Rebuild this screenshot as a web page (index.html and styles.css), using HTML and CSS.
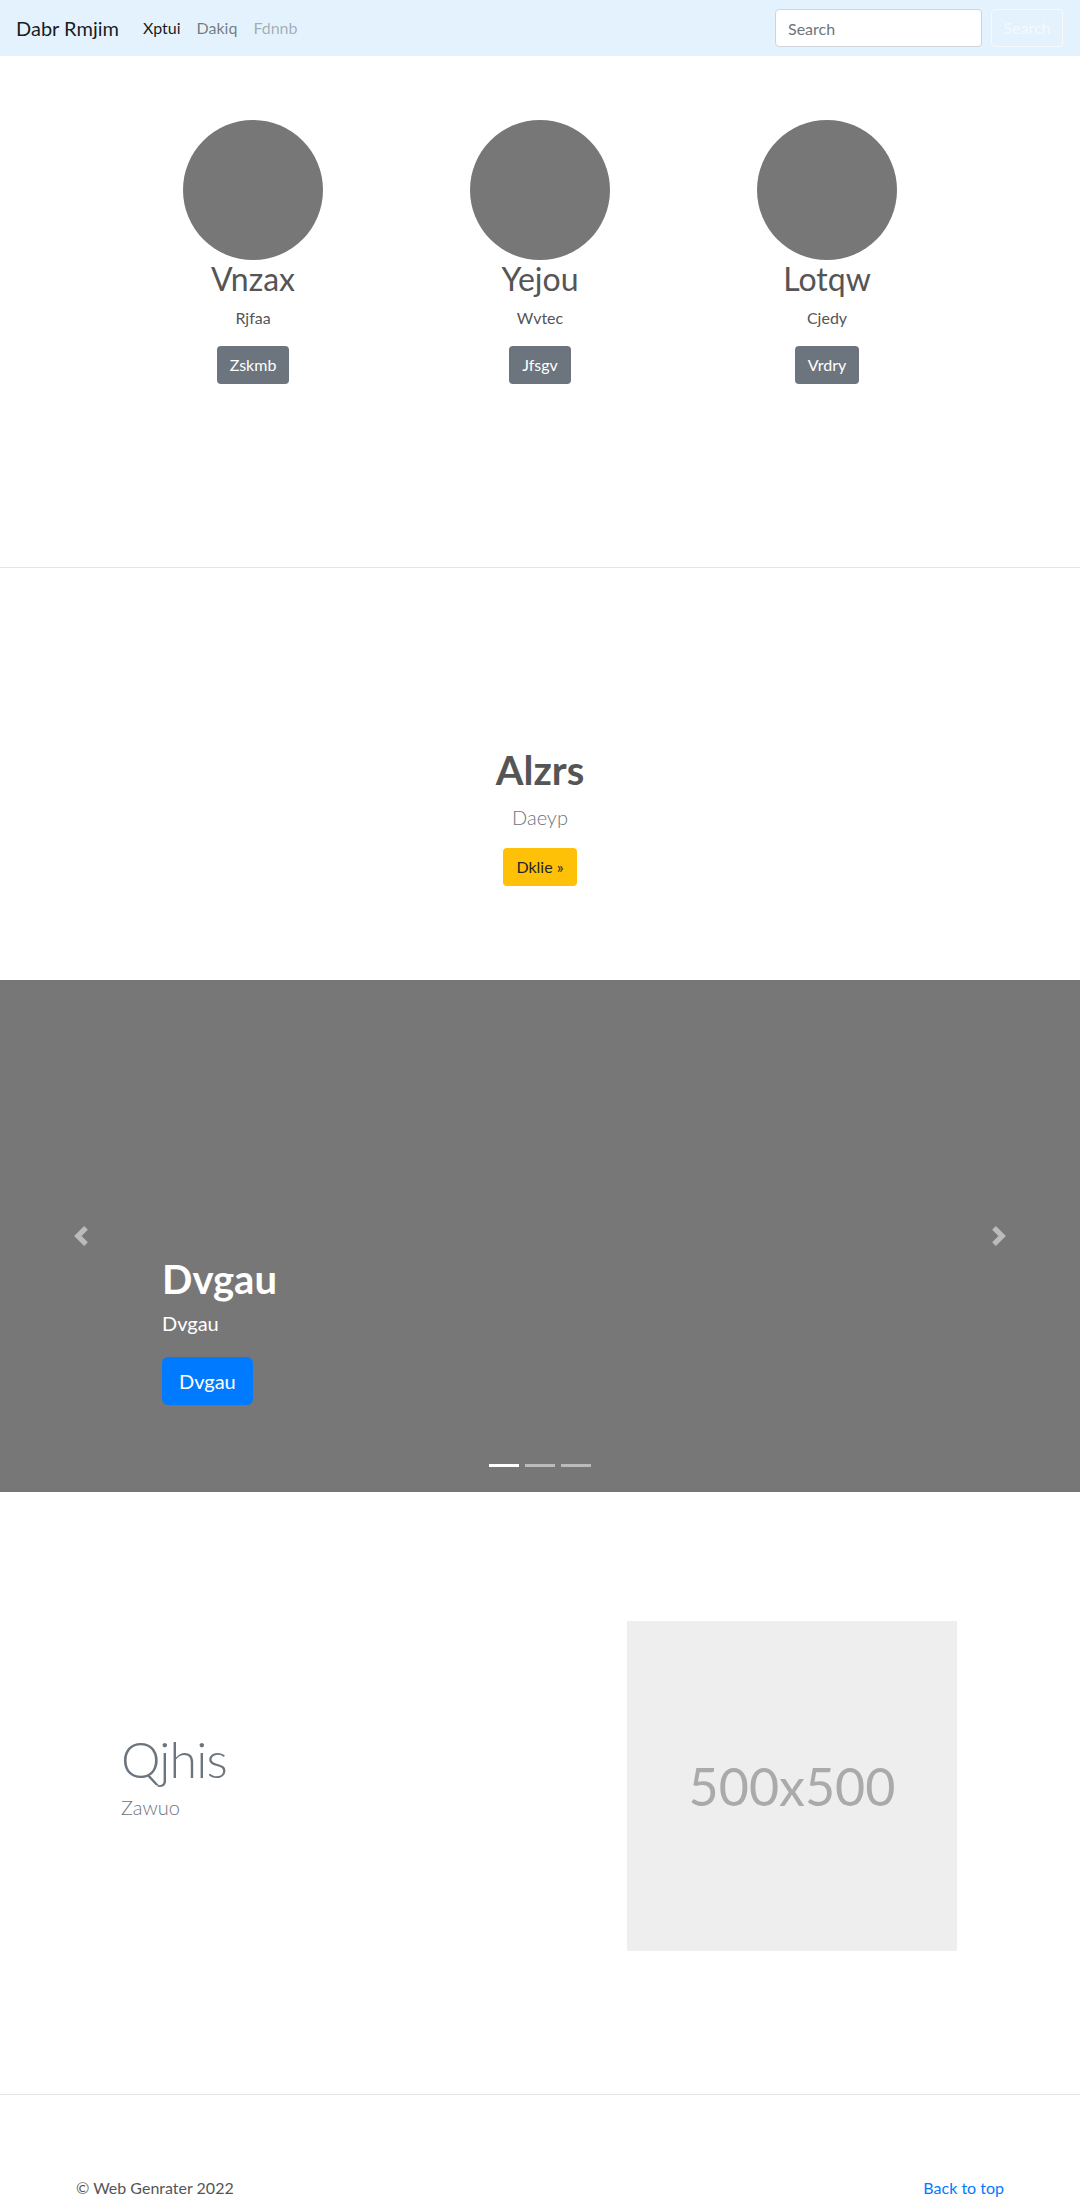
FILE: index.html
```html
<!DOCTYPE html>
<html lang="en">
<head>
<meta charset="utf-8">
<title>Dabr Rmjim</title>
<link rel="stylesheet" href="styles.css">
</head>
<body>
<nav class="navbar">
  <a class="brand" href="#">Dabr Rmjim</a>
  <ul class="nav">
    <li><a class="nav-link active" href="#">Xptui</a></li>
    <li><a class="nav-link" href="#">Dakiq</a></li>
    <li><a class="nav-link disabled" href="#">Fdnnb</a></li>
  </ul>
  <form class="search">
    <input class="search-input" type="text" placeholder="Search">
    <button class="btn-outline-light" type="button">Search</button>
  </form>
</nav>

<section class="team">
  <div class="team-row">
    <div class="member">
      <div class="avatar"></div>
      <h2 class="member-name">Vnzax</h2>
      <p class="member-role">Rjfaa</p>
      <a class="btn btn-secondary" href="#">Zskmb</a>
    </div>
    <div class="member">
      <div class="avatar"></div>
      <h2 class="member-name">Yejou</h2>
      <p class="member-role">Wvtec</p>
      <a class="btn btn-secondary" href="#">Jfsgv</a>
    </div>
    <div class="member">
      <div class="avatar"></div>
      <h2 class="member-name">Lotqw</h2>
      <p class="member-role">Cjedy</p>
      <a class="btn btn-secondary" href="#">Vrdry</a>
    </div>
  </div>
</section>

<section class="hero">
  <h1 class="hero-title">Alzrs</h1>
  <p class="hero-lead">Daeyp</p>
  <a class="btn btn-warning" href="#">Dklie »</a>
</section>

<section class="carousel">
  <a class="carousel-control prev" href="#">
    <svg class="control-icon" viewBox="0 0 8 8" width="20" height="20"><path d="M5.25 0l-4 4 4 4 1.5-1.5L4.25 4l2.5-2.5L5.25 0z" fill="#fff"/></svg>
  </a>
  <a class="carousel-control next" href="#">
    <svg class="control-icon" viewBox="0 0 8 8" width="20" height="20"><path d="M2.75 0l-1.5 1.5L3.75 4l-2.5 2.5L2.75 8l4-4-4-4z" fill="#fff"/></svg>
  </a>
  <div class="carousel-caption">
    <h1 class="caption-title">Dvgau</h1>
    <p class="caption-text">Dvgau</p>
    <a class="btn btn-primary btn-lg" href="#">Dvgau</a>
  </div>
  <ol class="indicators">
    <li class="indicator active"></li>
    <li class="indicator"></li>
    <li class="indicator"></li>
  </ol>
</section>

<section class="featurette">
  <div class="featurette-text">
    <h2 class="featurette-heading">Qjhis</h2>
    <p class="featurette-lead">Zawuo</p>
  </div>
  <div class="featurette-media">
    <div class="placeholder">500x500</div>
  </div>
</section>

<footer class="footer">
  <p class="copyright">© Web Genrater 2022</p>
  <a class="back-top" href="#">Back to top</a>
</footer>
</body>
</html>
```

FILE: styles.css
```css
* { box-sizing: border-box; }

html, body {
  margin: 0;
  padding: 0;
}

body {
  font-family: Lato, "Open Sans", sans-serif;
  font-size: 16px;
  line-height: 1.5;
  color: #555;
  background: #fff;
}

a { text-decoration: none; }

/* NAVBAR */
.navbar {
  display: flex;
  align-items: center;
  height: 56px;
  padding: 0 17px 0 16px;
  background: #e3f2fd;
}

.brand {
  font-size: 20px;
  line-height: 30px;
  color: rgba(0, 0, 0, .9);
  margin-right: 16px;
}

.nav {
  display: flex;
  list-style: none;
  margin: 0;
  padding: 0;
}

.nav-link {
  display: block;
  padding: 8px;
  color: rgba(0, 0, 0, .5);
}

.nav-link.active { color: rgba(0, 0, 0, .9); }
.nav-link.disabled { color: rgba(0, 0, 0, .3); }

.search {
  margin-left: auto;
  display: flex;
  gap: 9px;
  margin-bottom: 0;
}

.search-input {
  width: 207px;
  height: 38px;
  padding: 6px 12px;
  font: inherit;
  color: #495057;
  background: #fff;
  border: 1px solid #ced4da;
  border-radius: 4px;
}

.search-input::placeholder { color: #6c757d; }

.btn-outline-light {
  width: 72px;
  height: 38px;
  padding: 6px 0;
  font: inherit;
  color: #f8f9fa;
  background: transparent;
  border: 1px solid #f8f9fa;
  border-radius: 4px;
}

/* BUTTONS */
.btn {
  display: inline-block;
  padding: 6px 12px;
  font-size: 16px;
  line-height: 24px;
  border: 1px solid transparent;
  border-radius: 4px;
}

.btn-secondary { background: #6c757d; color: #fff; }
.btn-warning { background: #ffc107; color: #212529; }
.btn-primary { background: #007bff; color: #fff; }

.btn-lg {
  padding: 8px 16px;
  font-size: 20px;
  line-height: 30px;
  border-radius: 6px;
}

/* TEAM */
.team {
  height: 512px;
  padding-top: 64px;
  border-bottom: 1px solid #e5e5e5;
}

.team-row {
  display: grid;
  grid-template-columns: repeat(3, 287px);
  justify-content: center;
}

.member {
  display: flex;
  flex-direction: column;
  align-items: center;
  text-align: center;
}

.avatar {
  width: 140px;
  height: 140px;
  border-radius: 50%;
  background: #777;
}

.member-name {
  margin: 0 0 8px;
  font-size: 32px;
  font-weight: 400;
  line-height: 38px;
}

.member-role {
  margin: 0 0 16px;
  font-size: 16px;
  line-height: 24px;
}

/* HERO */
.hero {
  height: 412px;
  padding-top: 178px;
  text-align: center;
}

.hero-title {
  margin: 0 0 8px;
  font-size: 40px;
  font-weight: 700;
  line-height: 48px;
}

.hero-lead {
  margin: 0 0 16px;
  font-size: 20px;
  line-height: 30px;
  font-weight: 300;
  color: #6c757d;
}

/* CAROUSEL */
.carousel {
  position: relative;
  height: 512px;
  background: #777;
  display: flex;
  flex-direction: column;
  justify-content: flex-end;
  padding: 0 162px 87px;
}

.carousel-control {
  position: absolute;
  top: 0;
  bottom: 0;
  width: 162px;
  display: flex;
  align-items: center;
  justify-content: center;
  opacity: .5;
}

.carousel-control.prev { left: 0; }
.carousel-control.next { right: 0; }

.control-icon { display: block; }

.carousel-caption {
  color: #fff;
}

.caption-title {
  margin: 0 0 5px;
  font-size: 40px;
  font-weight: 700;
  line-height: 48px;
}

.caption-text {
  margin: 0 0 19px;
  font-size: 20px;
  line-height: 30px;
}

.indicators {
  position: absolute;
  left: 0;
  right: 0;
  bottom: 25px;
  display: flex;
  justify-content: center;
  list-style: none;
  margin: 0;
  padding: 0;
}

.indicator {
  width: 30px;
  height: 3px;
  margin: 0 3px;
  background: #fff;
  opacity: .5;
}

.indicator.active { opacity: 1; }

/* FEATURETTE */
.featurette {
  display: grid;
  grid-template-columns: 506px 347px;
  align-items: center;
  padding: 129px 0 143px 121px;
  border-bottom: 1px solid #e5e5e5;
}

.featurette-heading {
  margin: 0 0 8px;
  font-size: 50px;
  font-weight: 300;
  line-height: 1;
  letter-spacing: -.8px;
  color: #6c757d;
}

.featurette-lead {
  margin: 0 0 16px;
  font-size: 20px;
  font-weight: 300;
  line-height: 30px;
  color: #6c757d;
}

.featurette-media {
  display: flex;
}

.placeholder {
  width: 330px;
  height: 330px;
  display: flex;
  align-items: center;
  justify-content: center;
  background: #eee;
  color: #aaa;
  font-size: 52px;
}

/* FOOTER */
.footer {
  display: flex;
  justify-content: space-between;
  align-items: flex-start;
  padding: 81px 76px 30px 76px;
}

.copyright {
  margin: 0;
  color: #555;
}

.back-top { color: #007bff; }
```
